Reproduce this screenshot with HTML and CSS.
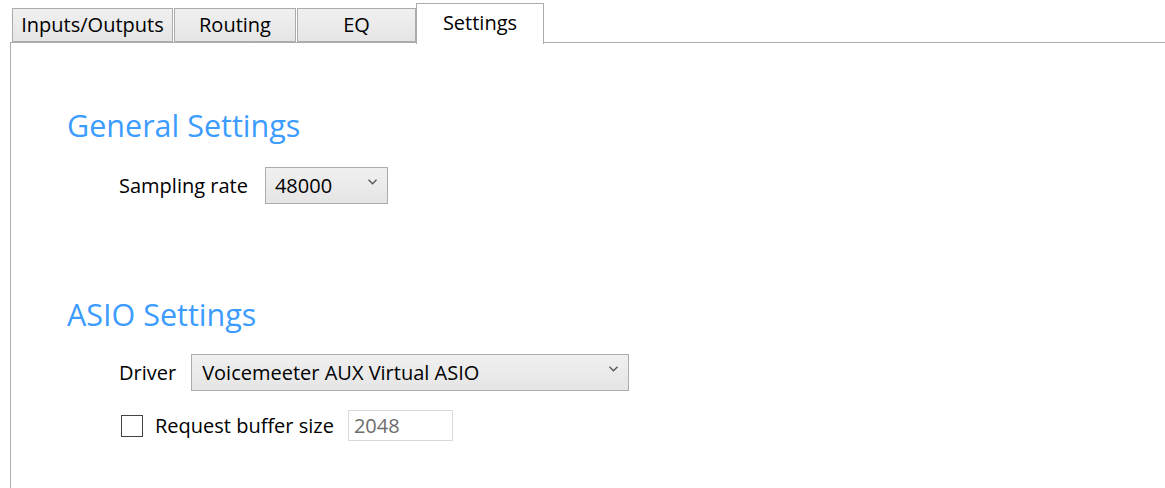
FILE: index.html
```html
<!doctype html>
<html lang="en">
<head>
    <meta charset="UTF-8">
    <title>Settings</title>
    <link rel="stylesheet" href="styles.css">
</head>
<body>
    <div class="tabs">
        <div class="tab tab-io">Inputs/Outputs</div>
        <div class="tab tab-routing">Routing</div>
        <div class="tab tab-eq">EQ</div>
        <div class="tab tab-settings active">Settings</div>
    </div>
    <div class="panel">
        <h2 class="section-title first">General Settings</h2>
        <div class="row row-rate">
            <span class="label">Sampling rate</span>
            <div class="combo combo-rate">
                <span class="combo-text">48000</span>
                <svg class="chevron" width="9" height="6" viewBox="0 0 9 6"><path d="M0.5 0.8 L4.5 4.8 L8.5 0.8" fill="none" stroke="#555" stroke-width="1.3"/></svg>
            </div>
        </div>

        <h2 class="section-title second">ASIO Settings</h2>
        <div class="row row-driver">
            <span class="label">Driver</span>
            <div class="combo combo-driver">
                <span class="combo-text">Voicemeeter AUX Virtual ASIO</span>
                <svg class="chevron" width="9" height="6" viewBox="0 0 9 6"><path d="M0.5 0.8 L4.5 4.8 L8.5 0.8" fill="none" stroke="#555" stroke-width="1.3"/></svg>
            </div>
        </div>
        <div class="row row-buffer">
            <span class="checkbox"></span>
            <span class="label">Request buffer size</span>
            <div class="textbox">2048</div>
        </div>
    </div>
</body>
</html>
```

FILE: styles.css
```css
body {
    margin: 0;
    background: #fff;
    font-family: "Open Sans", "Noto Sans", sans-serif;
    color: #000;
    overflow: hidden;
}
.tabs {
    display: flex;
    align-items: flex-end;
    height: 43px;
    padding-left: 12px;
    position: relative;
    z-index: 1;
}
.tab {
    box-sizing: border-box;
    height: 34px;
    margin-bottom: 1px;
    border: 1px solid #acacac;
    background: linear-gradient(#f0f0f0, #e5e5e5);
    font-size: 20px;
    line-height: 31px;
    text-align: center;
    margin-right: 1px;
}
.tab-io { width: 161px; }
.tab-routing { width: 122px; }
.tab-eq { width: 119px; }
.tab-settings { width: 128px; }
.tab.active {
    height: 41px;
    margin-bottom: -1px;
    margin-left: -1px;
    background: #fff;
    border-bottom: none;
    line-height: 37px;
}
.panel {
    margin-left: 10px;
    border-top: 1px solid #acacac;
    border-left: 1px solid #acacac;
    height: 460px;
    margin-top: -1px;
    padding-left: 56px;
}
.section-title {
    margin: 0;
    font-weight: normal;
    font-size: 30.5px;
    color: #3c9cff;
    line-height: 40px;
}
.section-title.first { padding-top: 62px; }
.section-title.second { margin-top: 90px; }
.row {
    display: flex;
    align-items: center;
    margin-left: 52px;
    font-size: 20px;
}
.row-rate { margin-top: 22px; }
.row-driver { margin-top: 20px; }
.row-buffer { margin-top: 19px; }
.row-rate .label { margin-right: 17px; }
.row-driver .label { margin-right: 15px; }
.row-buffer .label { margin-right: 14px; }
.combo {
    box-sizing: border-box;
    display: flex;
    align-items: center;
    justify-content: space-between;
    height: 37px;
    border: 1px solid #acacac;
    background: linear-gradient(#f0f0f0, #e5e5e5);
    padding: 0 10px 0 9px;
}
.combo-rate { width: 123px; }
.combo-driver { width: 438px; padding-left: 10px; }
.chevron { margin-top: -8px; }
.checkbox {
    box-sizing: border-box;
    width: 22px;
    height: 22px;
    border: 1px solid #444;
    margin-right: 12px;
    margin-left: 2px;
}
.textbox {
    box-sizing: border-box;
    width: 105px;
    height: 31px;
    border: 1px solid #d9d9d9;
    color: #6d6d6d;
    padding-left: 5px;
    line-height: 30px;
}
```
